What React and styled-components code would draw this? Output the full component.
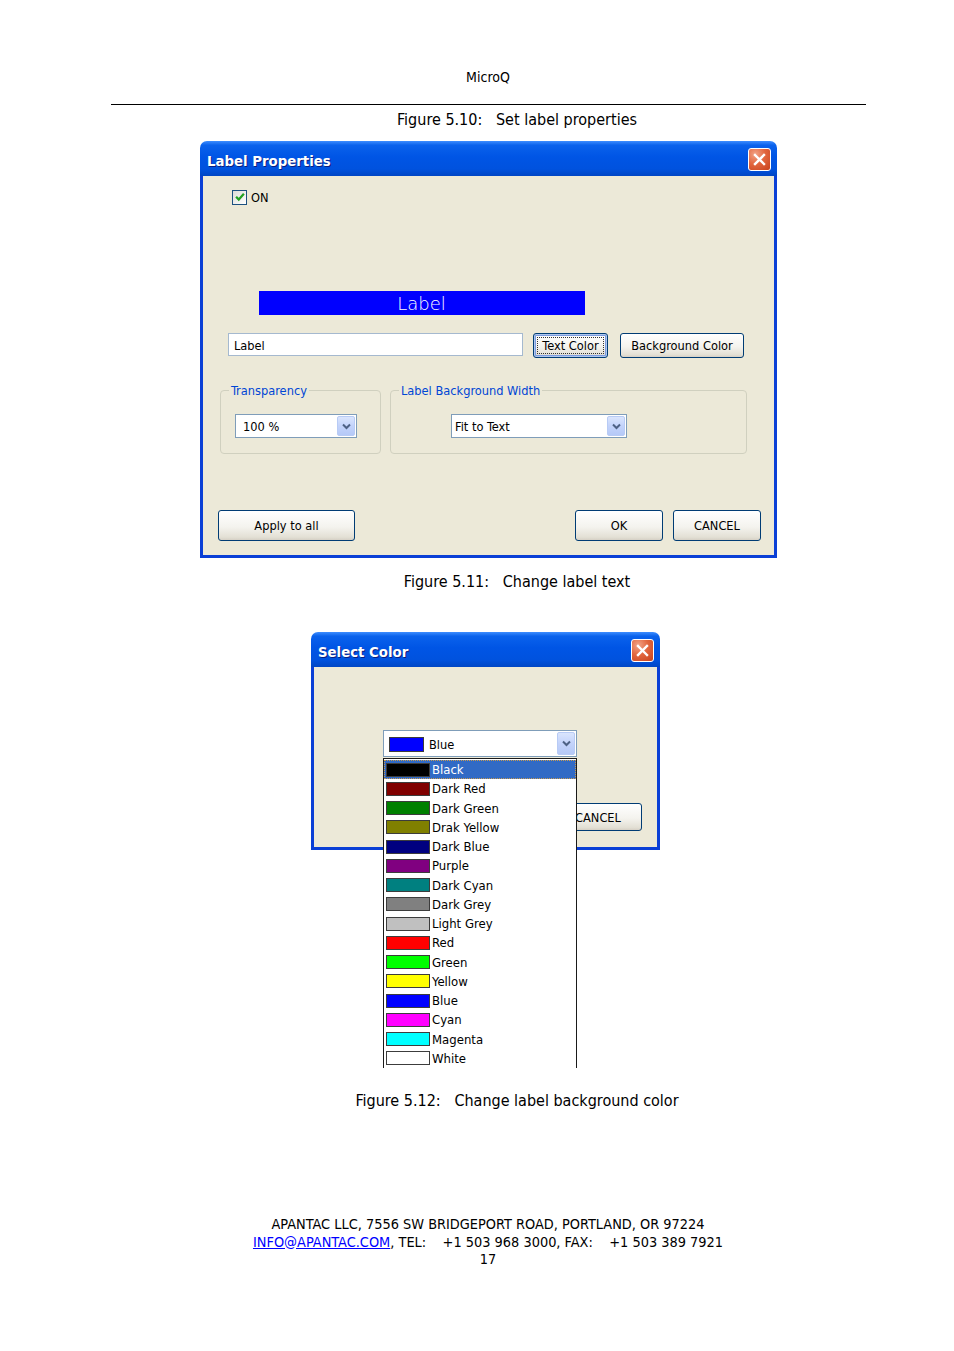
import React from 'react';
import styled, { createGlobalStyle, css } from 'styled-components';

const GlobalStyle = createGlobalStyle`
  html, body {
    margin: 0;
    padding: 0;
    background: #ffffff;
  }
  body {
    font-family: "DejaVu Sans Condensed", "DejaVu Sans", sans-serif;
    color: #000000;
  }
`;

const uiFont = `"DejaVu Sans Condensed", "DejaVu Sans", sans-serif`;

const Page = styled.div`
  width: 954px;
  height: 1351px;
  display: flex;
  flex-direction: column;
  align-items: flex-start;
  padding-top: 68px;
  box-sizing: border-box;
`;

const RunningHead = styled.div`
  width: 100%;
  text-align: center;
  padding-left: 22px;
  box-sizing: border-box;
  font-size: 14px;
  line-height: 18px;
`;

const Rule = styled.div`
  margin: 18px 0 0 111px;
  width: 755px;
  height: 1px;
  background: #000000;
`;

const Caption = styled.div`
  width: 100%;
  box-sizing: border-box;
  padding-left: 80px;
  text-align: center;
  font-size: 16px;
  line-height: 20px;
  margin-top: ${p => p.$top}px;
  white-space: pre;
`;

const Window = styled.div`
  margin: ${p => p.$top}px 0 0 ${p => p.$left}px;
  width: ${p => p.$width}px;
  display: flex;
  flex-direction: column;
  font-family: ${uiFont};
`;

const TitleBar = styled.div`
  height: 35px;
  border-radius: 7px 7px 0 0;
  background: linear-gradient(
    to bottom,
    #3d8dff 0%,
    #0a62ec 12%,
    #0055e5 45%,
    #0052de 80%,
    #0046c4 100%
  );
  display: flex;
  align-items: center;
  justify-content: space-between;
  padding: 0 6px 0 7px;
  box-sizing: border-box;
`;

const Title = styled.span`
  color: #ffffff;
  font-weight: bold;
  font-size: 14.8px;
  text-shadow: 1px 1px 0 #0a1e80;
  margin-top: 3px;
`;

const CloseButton = styled.div`
  width: 23px;
  height: 23px;
  box-sizing: border-box;
  border: 1px solid #ffffff;
  border-radius: 3px;
  background: radial-gradient(
    circle at 30% 25%,
    #f2a488 0%,
    #e2673f 45%,
    #c8421c 100%
  );
  display: flex;
  align-items: center;
  justify-content: center;
  margin-top: 2px;
`;

const Body = styled.div`
  background: #ece9d8;
  border: 3px solid #0a3fd6;
  border-top: none;
  height: ${p => p.$height}px;
  display: flex;
  flex-direction: column;
  align-items: flex-start;
  font-size: 12.7px;
`;

const CheckRow = styled.label`
  margin: 13px 0 0 29px;
  height: 16px;
  display: flex;
  align-items: center;
  gap: 4px;
`;

const CheckBox = styled.span`
  width: 15px;
  height: 15px;
  box-sizing: border-box;
  border: 1px solid #1c5180;
  background: linear-gradient(135deg, #dcdcd7 0%, #ffffff 100%);
  display: flex;
  align-items: center;
  justify-content: center;
`;

const LabelPreview = styled.div`
  margin: 86px 0 0 56px;
  width: 326px;
  height: 24px;
  background: #0000ff;
  color: #ffffff;
  font-family: "DejaVu Sans", sans-serif;
  font-weight: 200;
  font-size: 18px;
  display: flex;
  align-items: center;
  justify-content: center;
  padding: 1px 1px 0 0;
  box-sizing: border-box;
`;

const InputRow = styled.div`
  margin-top: 18px;
  padding-left: 25px;
  display: flex;
  align-items: flex-start;
`;

const TextInput = styled.div`
  width: 295px;
  height: 23px;
  box-sizing: border-box;
  border: 1px solid #a5b9cf;
  background: #ffffff;
  display: flex;
  align-items: center;
  padding: 1px 0 0 5px;
  margin-right: 10px;
`;

const Button = styled.div`
  width: ${p => p.$width}px;
  height: ${p => p.$height || 25}px;
  box-sizing: border-box;
  border: 1px solid #003c74;
  border-radius: 3px;
  background: linear-gradient(to bottom, #ffffff 0%, #f4f3ee 55%, #e3e0d5 90%, #d6d0c5 100%);
  display: flex;
  align-items: center;
  justify-content: center;
  margin-left: ${p => p.$gap || 0}px;
  position: relative;
  ${p =>
    p.$focused &&
    css`
      box-shadow: inset 0 0 0 1px #b0c8ee, inset 0 0 0 2px #7c9ce0;
      &::after {
        content: '';
        position: absolute;
        inset: 3px;
        border: 1px dotted #333333;
      }
    `}
`;

const GroupRow = styled.div`
  margin-top: 32px;
  padding-left: 17px;
  display: flex;
  gap: 9px;
`;

const GroupBox = styled.div`
  position: relative;
  width: ${p => p.$width}px;
  height: 64px;
  box-sizing: border-box;
  border: 1px solid #d0d0bf;
  border-radius: 4px;
  padding: 23px 0 0 ${p => p.$inset}px;
`;

const Legend = styled.span`
  position: absolute;
  top: -8px;
  left: 8px;
  padding: 0 2px;
  background: #ece9d8;
  color: #0046d5;
  line-height: 15px;
`;

const Combo = styled.div`
  position: relative;
  width: ${p => p.$width}px;
  height: ${p => p.$height || 24}px;
  box-sizing: border-box;
  border: 1px solid #7f9db9;
  background: #ffffff;
  display: flex;
  align-items: center;
  padding: 0 1px 0 ${p => p.$pad || 7}px;
`;

const ComboText = styled.span`
  flex: 1;
  display: flex;
  align-items: center;
  gap: 5px;
  padding-top: 1px;
`;

const ArrowButton = styled.span`
  width: 18px;
  height: calc(100% - 2px);
  box-sizing: border-box;
  border: 1px solid #b8cbf5;
  border-radius: 2px;
  background: linear-gradient(to bottom, #dae5fd 0%, #c3d3fb 50%, #b5c9f7 100%);
  display: flex;
  align-items: center;
  justify-content: center;
`;

const ButtonRow = styled.div`
  margin-top: 56px;
  align-self: stretch;
  display: flex;
  padding: 0 13px 0 15px;
`;

const Spacer = styled.div`
  flex: 1;
`;

const ComboArea = styled.div`
  margin: 63px 0 0 69px;
  position: relative;
  z-index: 2;
`;

const DropList = styled.div`
  position: absolute;
  left: 0;
  top: 28px;
  width: 194px;
  height: 310px;
  box-sizing: border-box;
  border: 1px solid #1a1a1a;
  border-bottom: none;
  background: #ffffff;
  padding-top: 1px;
  display: flex;
  flex-direction: column;
`;

const ListItem = styled.div`
  height: 19.27px;
  display: flex;
  align-items: center;
  padding-left: 2px;
  gap: 2px;
  box-sizing: border-box;
  font-size: 13px;
  ${p =>
    p.$selected &&
    css`
      background: #316ac5;
      color: #ffffff;
      outline: 1px dotted #c89a50;
      outline-offset: -1px;
    `}
`;

const Swatch = styled.span`
  width: ${p => p.$w || 44}px;
  height: ${p => p.$h || 14}px;
  box-sizing: border-box;
  border: 1px solid #3c3c3c;
  background: ${p => p.$color};
  flex: none;
`;

const CancelRow = styled.div`
  margin-top: 46px;
  align-self: stretch;
  display: flex;
  justify-content: flex-end;
  padding-right: 15px;
`;

const Footer = styled.div`
  width: 100%;
  margin-top: 105px;
  padding-left: 22px;
  box-sizing: border-box;
  text-align: center;
  font-size: 14.4px;
  line-height: 17.5px;
`;

const MailLink = styled.a`
  color: #0000ff;
  text-decoration: underline;
`;

const colors = [
  ['Black', '#000000'],
  ['Dark Red', '#800000'],
  ['Dark Green', '#008000'],
  ['Drak Yellow', '#808000'],
  ['Dark Blue', '#000080'],
  ['Purple', '#800080'],
  ['Dark Cyan', '#008080'],
  ['Dark Grey', '#808080'],
  ['Light Grey', '#c0c0c0'],
  ['Red', '#ff0000'],
  ['Green', '#00ff00'],
  ['Yellow', '#ffff00'],
  ['Blue', '#0000ff'],
  ['Cyan', '#ff00ff'],
  ['Magenta', '#00ffff'],
  ['White', '#ffffff'],
];

function CloseX() {
  return (
    <CloseButton>
      <svg width="13" height="13" viewBox="0 0 13 13">
        <path d="M2 2 L11 11 M11 2 L2 11" stroke="#ffffff" strokeWidth="2.4" strokeLinecap="square" />
      </svg>
    </CloseButton>
  );
}

function Chevron() {
  return (
    <svg width="9" height="7" viewBox="0 0 9 7">
      <path d="M1 1.5 L4.5 5 L8 1.5" fill="none" stroke="#4d6185" strokeWidth="2" />
    </svg>
  );
}

function Check() {
  return (
    <svg width="10" height="10" viewBox="0 0 9 9">
      <path d="M1 4.2 L3.4 6.8 L8 1.6" fill="none" stroke="#21a121" strokeWidth="2" />
    </svg>
  );
}

function LabelProperties() {
  return (
    <Window $top={11} $left={200} $width={577}>
      <TitleBar>
        <Title>Label Properties</Title>
        <CloseX />
      </TitleBar>
      <Body $height={379}>
        <CheckRow>
          <CheckBox>
            <Check />
          </CheckBox>
          ON
        </CheckRow>
        <LabelPreview>Label</LabelPreview>
        <InputRow>
          <TextInput>Label</TextInput>
          <Button $width={75} $focused>Text Color</Button>
          <Button $width={124} $gap={12}>Background Color</Button>
        </InputRow>
        <GroupRow>
          <GroupBox $width={161} $inset={14}>
            <Legend>Transparency</Legend>
            <Combo $width={122}>
              <ComboText>100 %</ComboText>
              <ArrowButton>
                <Chevron />
              </ArrowButton>
            </Combo>
          </GroupBox>
          <GroupBox $width={357} $inset={60}>
            <Legend>Label Background Width</Legend>
            <Combo $width={176} $pad={3}>
              <ComboText>Fit to Text</ComboText>
              <ArrowButton>
                <Chevron />
              </ArrowButton>
            </Combo>
          </GroupBox>
        </GroupRow>
        <ButtonRow>
          <Button $width={137} $height={31}>Apply to all</Button>
          <Spacer />
          <Button $width={88} $height={31}>OK</Button>
          <Button $width={88} $height={31} $gap={10}>CANCEL</Button>
        </ButtonRow>
      </Body>
    </Window>
  );
}

function SelectColor() {
  return (
    <Window $top={40} $left={311} $width={349}>
      <TitleBar>
        <Title>Select Color</Title>
        <CloseX />
      </TitleBar>
      <Body $height={180}>
        <ComboArea>
          <Combo $width={194} $height={27} $pad={5}>
            <ComboText>
              <Swatch $color="#0000ff" $w={35} $h={15} />
              Blue
            </ComboText>
            <ArrowButton>
              <Chevron />
            </ArrowButton>
          </Combo>
          <DropList>
            {colors.map(([name, color], i) => (
              <ListItem key={name} $selected={i === 0}>
                <Swatch $color={color} />
                {name}
              </ListItem>
            ))}
          </DropList>
        </ComboArea>
        <CancelRow>
          <Button $width={88} $height={28}>CANCEL</Button>
        </CancelRow>
      </Body>
    </Window>
  );
}

export default function App() {
  return (
    <>
      <GlobalStyle />
      <Page>
        <RunningHead>MicroQ</RunningHead>
        <Rule />
        <Caption $top={5}>{'Figure 5.10:   Set label properties'}</Caption>
        <LabelProperties />
        <Caption $top={14}>{'Figure 5.11:   Change label text'}</Caption>
        <SelectColor />
        <Caption $top={241}>{'Figure 5.12:   Change label background color'}</Caption>
        <Footer>
          APANTAC LLC, 7556 SW BRIDGEPORT ROAD, PORTLAND, OR 97224
          <br />
          <MailLink href="mailto:info@apantac.com">INFO@APANTAC.COM</MailLink>
          {', TEL:\u00a0\u00a0\u00a0 +1 503 968 3000, FAX:\u00a0\u00a0\u00a0 +1 503 389 7921'}
          <br />
          17
        </Footer>
      </Page>
    </>
  );
}
